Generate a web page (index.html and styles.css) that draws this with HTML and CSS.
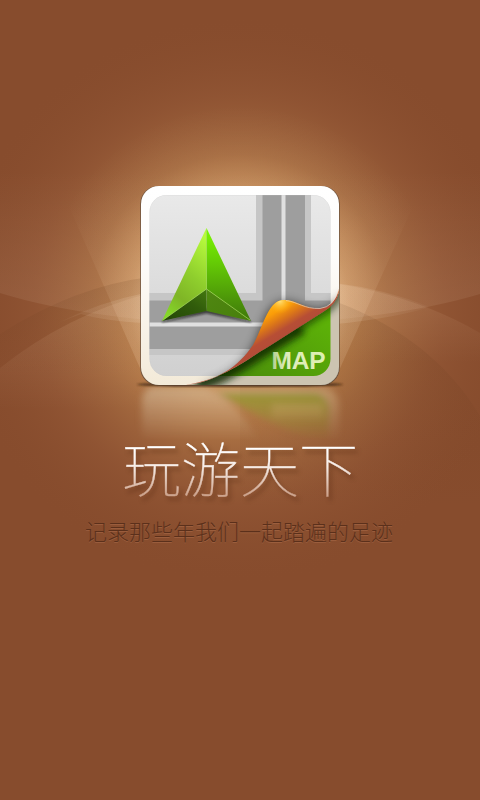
FILE: index.html
```html
<!DOCTYPE html>
<html lang="zh-CN">
<head>
<meta charset="utf-8">
<meta name="viewport" content="width=device-width, initial-scale=1">
<title>玩游天下</title>
<link rel="stylesheet" href="styles.css">
</head>
<body>
<main class="splash">
  <svg class="backdrop" viewBox="0 0 480 800" aria-hidden="true">
    <defs>
      <radialGradient id="glow" gradientUnits="userSpaceOnUse" cx="240" cy="300" r="285">
        <stop offset="0" stop-color="#cf945a"/>
        <stop offset=".36" stop-color="#bd824c"/>
        <stop offset=".52" stop-color="#a56b40" stop-opacity=".92"/>
        <stop offset=".72" stop-color="#945836" stop-opacity=".65"/>
        <stop offset="1" stop-color="#874c2d" stop-opacity="0"/>
      </radialGradient>
      <radialGradient id="halo" gradientUnits="userSpaceOnUse" cx="240" cy="305" r="200">
        <stop offset=".42" stop-color="#ffe6c8" stop-opacity=".42"/>
        <stop offset=".55" stop-color="#ffe0bc" stop-opacity=".2"/>
        <stop offset=".75" stop-color="#ffdcb4" stop-opacity=".06"/>
        <stop offset="1" stop-color="#ffdcb4" stop-opacity="0"/>
      </radialGradient>
      <radialGradient id="light" gradientUnits="userSpaceOnUse" cx="240" cy="300" r="210">
        <stop offset=".4" stop-color="#fff0dc" stop-opacity=".16"/>
        <stop offset="1" stop-color="#ffe8d8" stop-opacity="0"/>
      </radialGradient>
      <linearGradient id="wave" x1="0" y1="1" x2="0" y2="0">
        <stop offset="0" stop-color="#ffe0c8" stop-opacity=".1"/>
        <stop offset="1" stop-color="#ffe0c8" stop-opacity="0"/>
      </linearGradient>
      <linearGradient id="dim" x1="0" y1="0" x2="0" y2="1">
        <stop offset="0" stop-color="#5c3518" stop-opacity=".14"/>
        <stop offset="1" stop-color="#5c3518" stop-opacity="0"/>
      </linearGradient>
      <linearGradient id="lift" x1="0" y1="0" x2="0" y2="1">
        <stop offset="0" stop-color="#ffd9b5" stop-opacity=".13"/>
        <stop offset=".7" stop-color="#ffd9b5" stop-opacity="0"/>
      </linearGradient>
    </defs>
    <rect width="480" height="800" fill="#874c2d"/>
    <rect width="480" height="600" fill="url(#glow)"/>
    <path d="M143 375 31 120V60H445V135L337 375Z" fill="url(#halo)"/>
    <path d="M0 293Q90 321 240 325Q390 321 480 294V170H0Z" fill="url(#wave)"/>
    <path d="M0 334Q75 286 150 277H240V375H0Z" fill="url(#dim)"/>
    <path d="M0 368Q66 315 150 293H240V460H0Z" fill="url(#lift)"/>
    <path d="M240 278Q380 275 480 333V400H240Z" fill="url(#lift)"/>
    <path d="M320 296Q430 332 480 416V510H240V296Z" fill="url(#dim)"/>
    <path d="M60 322Q100 302 145 293V323Q105 321 81 314ZM335 283Q385 289 430 307Q390 319 335 324Z" fill="url(#light)"/>
  </svg>

  <svg class="app-icon" viewBox="130 176 220 264" role="img" aria-label="MAP">
    <defs>
      <linearGradient id="frame" x1="0" y1="0" x2="0" y2="1">
        <stop offset="0" stop-color="#fff"/><stop offset=".35" stop-color="#fefdfb"/><stop offset="1" stop-color="#f3ead8"/>
      </linearGradient>
      <linearGradient id="paper" x1="0" y1="0" x2="0" y2="1">
        <stop offset="0" stop-color="#e9e9e9"/><stop offset="1" stop-color="#d0d0d0"/>
      </linearGradient>
      <linearGradient id="leftFace" x1=".7" y1="0" x2=".3" y2="1">
        <stop offset="0" stop-color="#b6fa3c"/><stop offset=".45" stop-color="#8fce2d"/><stop offset=".75" stop-color="#7fb526"/><stop offset="1" stop-color="#85d829"/>
      </linearGradient>
      <linearGradient id="rightFace" x1="0" y1="0" x2="0" y2="1">
        <stop offset="0" stop-color="#7bf900"/><stop offset=".35" stop-color="#66ce05"/><stop offset="1" stop-color="#3e760b"/>
      </linearGradient>
      <linearGradient id="leftFoot" x1="0" y1="1" x2="1" y2="0">
        <stop offset="0" stop-color="#234507"/><stop offset=".6" stop-color="#315c0b"/><stop offset="1" stop-color="#44780f"/>
      </linearGradient>
      <linearGradient id="rightFoot" x1="0" y1="0" x2="1" y2="1">
        <stop offset="0" stop-color="#508712"/><stop offset="1" stop-color="#477f0b"/>
      </linearGradient>
      <linearGradient id="curl" gradientUnits="userSpaceOnUse" x1="265" y1="304" x2="286" y2="339">
        <stop offset="0" stop-color="#ffb51b"/><stop offset=".3" stop-color="#fb9d08"/><stop offset=".52" stop-color="#dc7718"/><stop offset=".76" stop-color="#b74e35"/><stop offset="1" stop-color="#b14b38"/>
      </linearGradient>
      <radialGradient id="shine" gradientUnits="userSpaceOnUse" cx="280" cy="301" r="13">
        <stop offset="0" stop-color="#ffe07a"/><stop offset="1" stop-color="#ffb000" stop-opacity="0"/>
      </radialGradient>
      <linearGradient id="green" x1="1" y1="0" x2=".3" y2="1">
        <stop offset="0" stop-color="#62bf08"/><stop offset=".5" stop-color="#5cb008"/><stop offset="1" stop-color="#47870b"/>
      </linearGradient>
      <linearGradient id="label" x1="0" y1="0" x2="1" y2="0">
        <stop offset="0" stop-color="#b4cf90"/><stop offset=".3" stop-color="#e0edbd"/><stop offset="1" stop-color="#dcf0b0"/>
      </linearGradient>
      <linearGradient id="fade" x1="0" y1="0" x2="0" y2="1">
        <stop offset="0" stop-color="#fff" stop-opacity=".9"/><stop offset="1" stop-color="#fff" stop-opacity="0"/>
      </linearGradient>
      <clipPath id="tile"><rect x="141" y="186" width="198" height="199" rx="18"/></clipPath>
      <clipPath id="window"><rect x="149.500" y="195" width="181" height="181" rx="17"/></clipPath>
      <clipPath id="under"><path d="M183 385.500C205 383 217 377 233 368.500C248 360 256 354 268 347L323 312Q337 303 339.500 290V386Z"/></clipPath>
      <filter id="soft1"><feGaussianBlur stdDeviation="1.300"/></filter>
      <filter id="soft3" x="-30%" y="-30%" width="160%" height="160%"><feGaussianBlur stdDeviation="3.500"/></filter>
      <filter id="soft6" x="-40%" y="-40%" width="180%" height="180%"><feGaussianBlur stdDeviation="6"/></filter>
      <mask id="reflection"><rect x="130" y="386" width="220" height="55" fill="url(#fade)"/></mask>
    </defs>

    <g mask="url(#reflection)">
      <g filter="url(#soft3)">
        <path d="M142 387H205Q242 403 262 450H142V402Q142 390 152 388Z" fill="#dcc9ad" opacity=".6"/>
        <path d="M205 387H325Q339 392 339 408V450H329V411Q329 397 316 396H228Z" fill="#dcc49b" opacity=".48"/>
        <path d="M217 393H316Q330 397 330 412V450H330Q272 425 217 393Z" fill="#8f9b30" opacity=".95"/>
        <path d="M272 404H323V418H272Z" fill="#c9c070" opacity=".5"/>
      </g>
    </g>
    <ellipse cx="240" cy="384.500" rx="103" ry="2.300" fill="#3c2714" opacity=".9" filter="url(#soft1)"/>
    <rect x="140.200" y="186" width="199.600" height="199.600" rx="18" fill="#5c4938" opacity=".8"/>

    <g clip-path="url(#tile)">
      <rect x="141" y="186" width="198" height="199" fill="url(#frame)"/>
      <g clip-path="url(#window)">
        <rect x="149" y="195" width="182" height="182" fill="url(#paper)"/>
        <path d="M256 195H311V293H331V355H149V293H256Z" fill="#c6c6c6"/>
        <path d="M262.500 195H305V300.500H331V349H149V300.500H262.500Z" fill="#9e9e9e"/>
        <path d="M281.500 195H285.500V301H281.500ZM149 322.500H268V326.500H149Z" fill="#e0e0e0"/>
        <rect x="149.500" y="195" width="181" height="181" rx="17" fill="none" stroke="#ccc" stroke-opacity=".35"/>
      </g>
      <path d="M200 388C228 379 243 369 256 345C266 324 268 304 284 303C298 303 305 312 320 311Q335 310 344 294V390Z" fill="#000" opacity=".8" filter="url(#soft6)"/>
      <g clip-path="url(#under)">
        <rect x="141" y="186" width="198" height="199" fill="#ccc4b1"/>
        <rect x="149.500" y="195" width="181" height="181" rx="17" fill="url(#green)"/>
        <path d="M196 383Q214 380 235 366L300 326" fill="none" stroke="#102500" stroke-width="17" opacity=".85" filter="url(#soft3)"/>
        <path d="M296 328 321 312Q338 303 341 285" fill="none" stroke="#102500" stroke-width="9" opacity=".65" filter="url(#soft3)"/>
      </g>
      <path d="M183 385.500C219 380 237 368 253 345C264 325 268 300 284 300C297 300 304 309 320 308.500Q335 307 339.500 287Q339 303 323 312L268 347C256 354 248 360 233 368.500C217 377 205 383 183 385.500Z" fill="url(#curl)"/>
      <path d="M253 345C264 325 268 300 284 300C295 300 300 306 309 307L267 330Z" fill="url(#shine)"/>
      <path d="M286 300.500C298 302 304 309 320 308.500Q334 307 339 289" fill="none" stroke="#efddc9" stroke-width=".8" opacity=".8"/>
    </g>

    <path d="M162 322 206.500 313 251 322 207 309Z" fill="#111" stroke="#111" opacity=".65" filter="url(#soft1)"/>
    <path d="M206.500 228V289L162 321Z" fill="url(#leftFace)"/>
    <path d="M206.500 228 251 321 206.500 289Z" fill="url(#rightFace)"/>
    <path d="M162 321 206.500 289V311Z" fill="url(#leftFoot)"/>
    <path d="M206.500 289 251 321 206.500 311Z" fill="url(#rightFoot)"/>
    <path d="M206.500 230V289L162.500 320.500M206.500 289 250 320" fill="none" stroke="#a5df51" stroke-width=".8" opacity=".8"/>
    <text class="icon-label" x="271.500" y="368.500" textLength="54" fill="url(#label)">MAP</text>
  </svg>

  <h1 class="title">玩游天下</h1>
  <p class="tagline">记录那些年我们一起踏遍的足迹</p>
</main>
</body>
</html>
```
FILE: styles.css
```css
* {
  box-sizing: border-box;
}

body {
  margin: 0;
  background: #874c2d;
  font-family: "Noto Sans CJK SC", "Liberation Sans", sans-serif;
}

.splash {
  position: relative;
  display: flex;
  flex-direction: column;
  align-items: center;
  width: 480px;
  height: 800px;
  padding-top: 176px;
  overflow: hidden;
}

.backdrop {
  position: absolute;
  inset: 0;
  width: 480px;
  height: 800px;
}

.app-icon {
  position: relative;
  flex: none;
  width: 220px;
  height: 264px;
}

.icon-label {
  font: bold 24.5px "Liberation Sans", sans-serif;
}

.title {
  position: relative;
  margin: -4px 0 0;
  height: 62px;
  font-size: 59px;
  line-height: 62px;
  font-weight: 100;
  white-space: nowrap;
  color: transparent;
  background: linear-gradient(#fff 20%, #f6ece6 50%, #cda48e 95%);
  -webkit-background-clip: text;
  background-clip: text;
  -webkit-text-stroke: 0.4px transparent;
  filter: drop-shadow(3px 4px 2px rgba(70, 30, 10, 0.4));
}

.tagline {
  position: relative;
  margin: 17px 2px 0 0;
  font-size: 22px;
  line-height: 30px;
  font-weight: 300;
  white-space: nowrap;
  color: #5b301b;
  text-shadow: 0 1px 0 rgba(190, 125, 90, 0.35);
}
```
